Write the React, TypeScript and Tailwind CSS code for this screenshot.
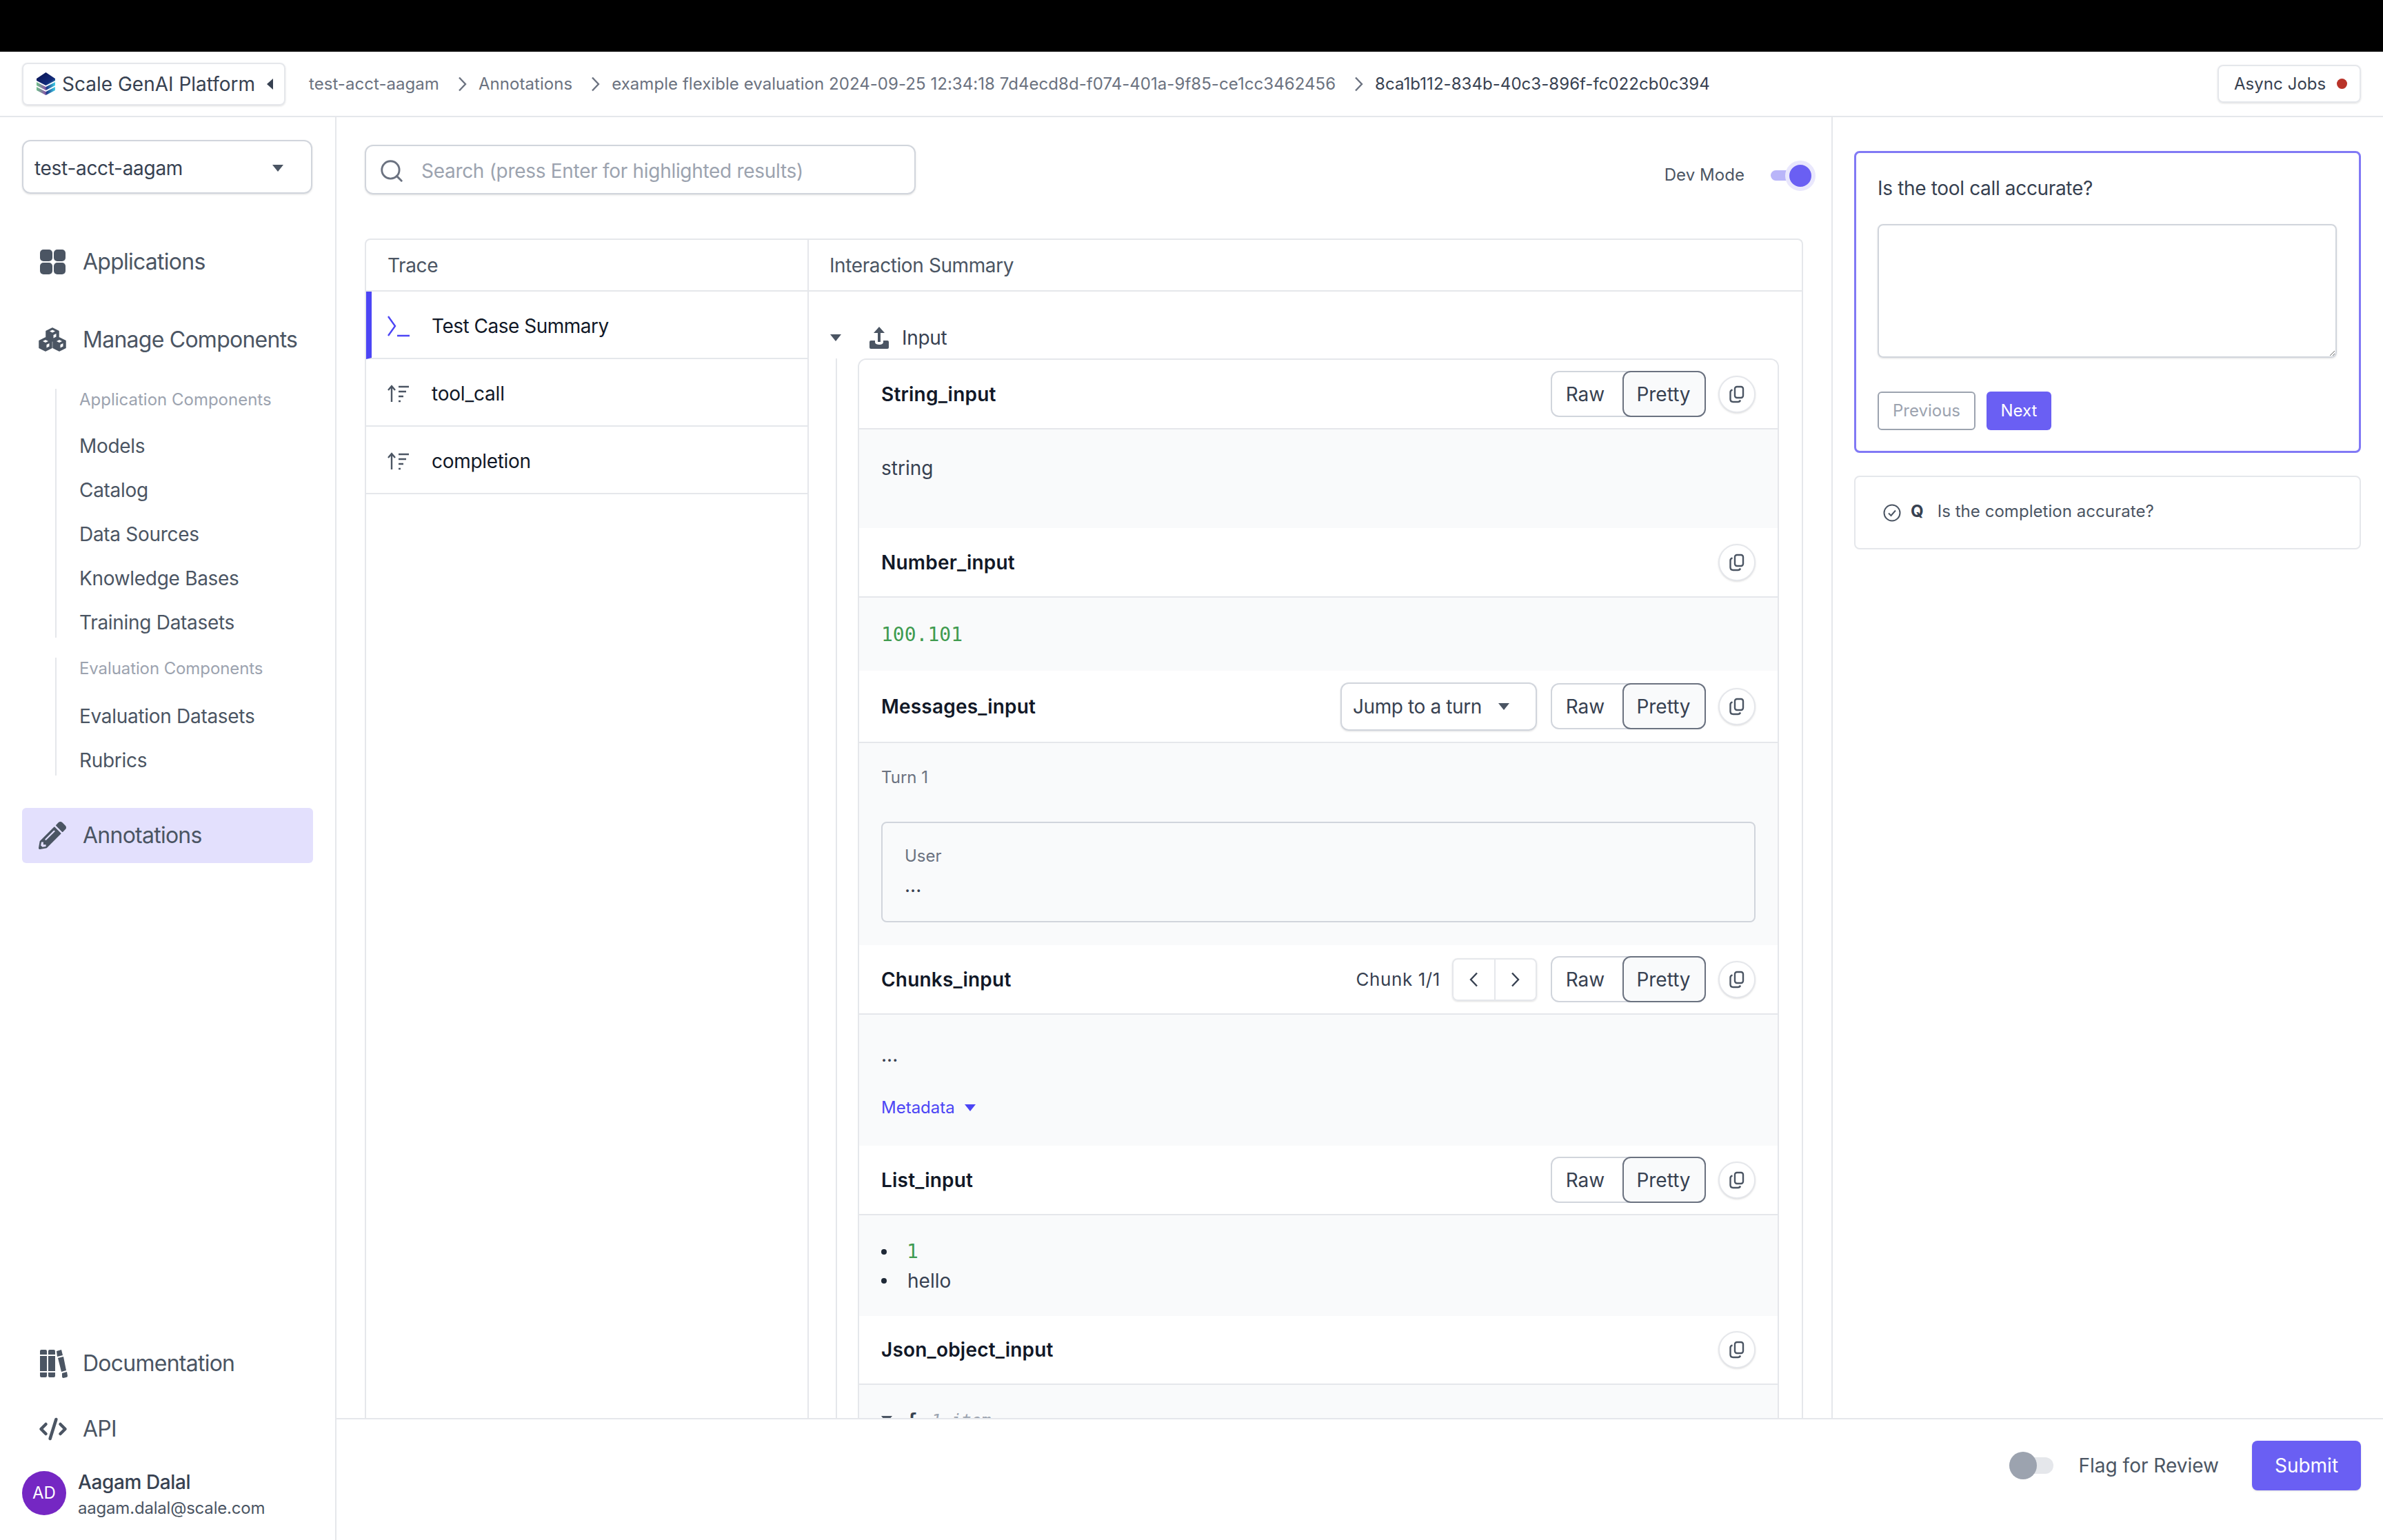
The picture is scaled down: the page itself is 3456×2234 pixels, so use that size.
import React from 'react';
import { CodeXml, Search } from 'lucide-react';
import { FaPencilAlt } from 'react-icons/fa';

const CopyIcon = () => (
    <svg width="22" height="26" viewBox="0 0 22 26" fill="none" stroke="#4b5563" strokeWidth="2.4">
        <rect x="8" y="2" width="12" height="16" rx="3" />
        <path d="M4.5 6.5C2.5 7 1.5 8 1.5 10v10c0 2.5 1.5 4 4 4h7c2 0 3-1 3.5-2.5" />
    </svg>
);

const Caret = ({ className = 'border-t-[#4b5563]' }: { className?: string }) => (
    <span className={`inline-block w-0 h-0 border-x-[8px] border-x-transparent border-t-[10px] ${className}`} />
);

// narrow chevron, lucide's is too wide for the breadcrumb
const Chevron = ({ left = false, className = '' }: { left?: boolean; className?: string }) => (
    <svg className={className} width="14" height="22" viewBox="0 0 14 22" fill="none" stroke="currentColor" strokeWidth="2.4">
        <path d={left ? 'M12 1.5L3 11l9 9.5' : 'M2 1.5L11 11l-9 9.5'} />
    </svg>
);

const TraceIcon = () => (
    <svg width="32" height="26" viewBox="0 0 32 26" fill="none" stroke="#4b5563" strokeWidth="2.4">
        <path d="M6 25V3M1 8l5-6 5 6" />
        <path d="M16 3h15M16 10h11M16 17h7M16 24h3" />
    </svg>
);

const CubesIcon = () => (
    <svg width="40" height="36" viewBox="0 0 40 36">
        <g fill="#4b5563" stroke="#4b5563" strokeWidth="1.5" strokeLinejoin="round">
            <path d="M20 1l9 4.5v10L20 20l-9-4.5v-10z" />
            <path d="M10 15l9 4.5v10L10 34l-9-4.500v-10z" />
            <path d="M30 15l9 4.500v10L30 34l-9-4.500v-10z" />
        </g>
        <g fill="#fff">
            <path d="M20 3.500l4 2-4 2-4-2zM21.500 11l4-2v4.500l-4 2zM10 18l4 2-4 2-4-2zM30 18l4 2-4 2-4-2zM11.500 25l4-2v4.500l-4 2zM31.500 25l4-2v4.500l-4 2z" />
        </g>
    </svg>
);

const ScaleLogo = () => (
    <svg width="29" height="33" viewBox="0 0 29 33">
        <defs>
            <linearGradient id="scaleTop" x1="0" y1="0" x2="1" y2="1">
                <stop offset="0" stopColor="#0a1450" />
                <stop offset="0.7" stopColor="#132a7a" />
                <stop offset="1" stopColor="#3fd0e8" />
            </linearGradient>
            <linearGradient id="scaleEdge" x1="0" y1="0" x2="1" y2="0">
                <stop offset="0" stopColor="#6fc28a" />
                <stop offset="0.45" stopColor="#8a5fa8" />
                <stop offset="0.55" stopColor="#1d3a8a" />
                <stop offset="1" stopColor="#3fd0e8" />
            </linearGradient>
        </defs>
        <path d="M1 21l13.500 7L28 21v5l-13.500 7L1 26z" fill="url(#scaleEdge)" />
        <path d="M1 14l13.500 7L28 14v5l-13.500 7L1 19z" fill="url(#scaleEdge)" />
        <path d="M14.500 0L28 9v3l-13.500 7L1 12V9z" fill="url(#scaleTop)" />
    </svg>
);

const CopyButton = () => (
    <button className="w-[54px] h-[54px] rounded-full border-2 border-gray-200 bg-white shadow-sm flex items-center justify-center">
        <CopyIcon />
    </button>
);

const RawPretty = () => (
    <div className="flex h-[67px] w-[225px] ml-[2px] text-[28px] text-[#374151] rounded-xl border-2 border-gray-300 bg-white">
        <div className="w-[102px] pr-[6px] flex items-center justify-center">Raw</div>
        <div className="flex-1 -my-[2px] -mr-[2px] pr-[2px] flex items-center justify-center rounded-xl border-2 border-[#6b7280] bg-gray-50">Pretty</div>
    </div>
);

function FieldHeader({ title, height, children }: { title: string; height: string; children?: React.ReactNode }) {
    return (
        <div className={`flex items-center justify-between pl-8 pr-[32px] bg-white border-b-2 border-gray-200 ${height}`}>
            <span className="text-[28px] font-semibold tracking-[0.2px] text-[#111827]">{title}</span>
            <div className="flex items-center gap-[18px]">{children}</div>
        </div>
    );
}

const subLinks1 = ['Models', 'Catalog', 'Data Sources', 'Knowledge Bases', 'Training Datasets'];
const subLinks2 = ['Evaluation Datasets', 'Rubrics'];

function Sidebar() {
    return (
        <aside className="w-[488px] shrink-0 border-r-2 border-gray-200 flex flex-col px-8 pt-[33px] text-[#4b5563]">
            <div className="h-[78px] w-[421px] rounded-xl border-2 border-gray-300 shadow-sm flex items-center justify-between pl-4 pr-10 pt-[3px] text-[28px] tracking-[-0.3px] text-[#374151]">
                <span>test-acct-aagam</span>
                <Caret />
            </div>

            <div className="flex items-center h-[40px] mt-[79px] pl-[26px] gap-[25px] text-[32px] tracking-[-0.75px]">
                <div className="grid grid-cols-2 gap-[2px] w-[37px]">
                    <span className="h-[17px] rounded-[5px] bg-[#4b5563]" />
                    <span className="h-[17px] rounded-[5px] bg-[#4b5563]" />
                    <span className="h-[17px] rounded-[5px] bg-[#4b5563]" />
                    <span className="h-[17px] rounded-[5px] bg-[#4b5563]" />
                </div>
                Applications
            </div>
            <div className="flex items-center h-[40px] mt-[73px] pl-[24px] gap-[24px] text-[32px] tracking-[-0.75px]">
                <CubesIcon />
                Manage Components
            </div>

            <div className="ml-[48px] mt-[51px] pl-[33px] border-l-2 border-gray-200">
                <div className="h-[32px] flex items-center text-[24px] text-[#9ca3af]">Application Components</div>
                <div className="flex flex-col mt-[29px] gap-[20px] text-[28px] tracking-[-0.3px]">
                    {subLinks1.map((l) => (
                        <div key={l} className="h-[44px] flex items-center">{l}</div>
                    ))}
                </div>
            </div>
            <div className="ml-[48px] mt-[29px] pl-[33px] border-l-2 border-gray-200">
                <div className="h-[32px] flex items-center text-[24px] tracking-[-0.1px] text-[#9ca3af]">Evaluation Components</div>
                <div className="flex flex-col mt-[31px] gap-[20px] text-[28px] tracking-[-0.3px]">
                    {subLinks2.map((l) => (
                        <div key={l} className="h-[44px] flex items-center">{l}</div>
                    ))}
                </div>
            </div>

            <div className="mt-[47px] h-[80px] rounded-md bg-[#e3e0fd] flex items-center pl-[24px] gap-[24px] text-[32px] tracking-[-0.75px]">
                <FaPencilAlt className="w-[40px] h-[40px]" />
                Annotations
            </div>

            <div className="mt-auto flex items-center h-[40px] pl-[24px] gap-[22px] text-[32px] tracking-[-0.75px]">
                <svg width="42" height="42" viewBox="0 0 42 42" fill="#4b5563">
                    <path d="M2 3q0-2 2-2h6q2 0 2 2v5H2zM2 10h10v22H2zM2 34h10v5q0 2-2 2H4q-2 0-2-2zM14 3q0-2 2-2h6q2 0 2 2v5H14zM14 10h10v22H14zM14 34h10v5q0 2-2 2h-6q-2 0-2-2zM26 3l7-2 2 8-8 2zM28 13l8-2 4 20-7 2zM34 35l7-2 1 6q0 2-2 2l-4 1q-2 0-2-2z" />
                </svg>
                Documentation
            </div>
            <div className="mt-[55px] flex items-center h-[40px] pl-[24px] gap-[22px] text-[32px] tracking-[-0.75px]">
                <CodeXml className="w-[42px] h-[42px]" strokeWidth={2.6} />
                API
            </div>
            <div className="mt-[32px] mb-[27px] flex items-center gap-[17px]">
                <div className="w-[64px] h-[64px] rounded-full bg-[#7527c3] text-white text-[24px] flex items-center justify-center">AD</div>
                <div className="flex flex-col pt-[6px]">
                    <span className="text-[28px] font-medium tracking-[-0.4px] text-[#374151] leading-[38px]">Aagam Dalal</span>
                    <span className="text-[24px] tracking-[-0.2px] leading-[38px]">aagam.dalal@scale.com</span>
                </div>
            </div>
        </aside>
    );
}

function TopBar() {
    return (
        <header className="h-[95px] shrink-0 border-b-2 border-gray-200 flex items-center pl-8 pr-8 text-[24px] text-[#6b7280] tracking-[0.05px]">
            <div className="w-[382px] h-[62px] rounded-lg border-2 border-gray-200 shadow-sm flex items-center pl-[18px] gap-[9px] text-[28px] text-[#374151] tracking-normal">
                <ScaleLogo />
                <span>Scale GenAI Platform</span>
                <span className="ml-[8px] w-0 h-0 border-y-[8px] border-y-transparent border-r-[9px] border-r-[#374151]" />
            </div>
            <span className="ml-[34px]">test-acct-aagam</span>
            <Chevron className="ml-[27px] mr-[16px]" />
            <span>Annotations</span>
            <Chevron className="ml-[27px] mr-[16px]" />
            <span>example flexible evaluation 2024-09-25 12:34:18 7d4ecd8d-f074-401a-9f85-ce1cc3462456</span>
            <Chevron className="ml-[27px] mr-[16px]" />
            <span className="text-[#374151]">8ca1b112-834b-40c3-896f-fc022cb0c394</span>
            <div className="ml-auto w-[208px] h-[55px] rounded-lg border-2 border-gray-200 shadow-sm flex items-center pl-[22px] gap-[16px] text-[#374151]">
                Async Jobs
                <span className="w-[15px] h-[15px] rounded-full bg-[#b93329]" />
            </div>
        </header>
    );
}

function TraceColumn() {
    return (
        <div className="w-[642px] shrink-0 border-r-2 border-gray-200 flex flex-col">
            <div className="h-[75px] shrink-0 flex items-center pl-[31px] text-[28px] tracking-[-0.4px] text-[#4b5563] border-b-2 border-gray-200">Trace</div>
            <div className="h-[98px] border-b-2 border-gray-200 flex items-center text-[28px] tracking-[-0.5px] text-[#111827] border-l-[8px] border-l-[#4c45f5] pl-[23px] pt-[3px] gap-[32px]">
                <svg width="32" height="32" viewBox="0 0 32 32" fill="none" stroke="#4c45f5" strokeWidth="2.4">
                    <path d="M1 2l10 14L1 30" />
                    <path d="M14 30h18" />
                </svg>
                Test Case Summary
            </div>
            <div className="h-[98px] border-b-2 border-gray-200 flex items-center text-[28px] tracking-[-0.2px] text-[#111827] pl-[31px] pt-[3px] gap-[32px]">
                <TraceIcon />
                tool_call
            </div>
            <div className="h-[98px] border-b-2 border-gray-200 flex items-center text-[28px] tracking-[-0.3px] text-[#111827] pl-[31px] pt-[3px] gap-[32px]">
                <TraceIcon />
                completion
            </div>
        </div>
    );
}

function Fields() {
    return (
        <div className="flex-1 min-w-0 flex flex-col">
            <div className="h-[75px] shrink-0 flex items-center pl-[30px] text-[28px] tracking-[-0.4px] text-[#4b5563] border-b-2 border-gray-200">Interaction Summary</div>
            <div className="h-[97px] shrink-0 flex items-center pt-[36px] pl-[31px] text-[28px] tracking-[-0.3px] text-[#374151]">
                <Caret />
                <svg className="ml-[40px] mr-[18px]" width="30" height="32" viewBox="0 0 30 32" fill="#4b5563">
                    <path d="M15 0l8 9h-6v13h-4V9H7z" />
                    <path d="M1 22q0-2 2-2h6v2q0 4 6 4t6-4v-2h6q2 0 2 2v8q0 2-2 2H3q-2 0-2-2z" />
                </svg>
                Input
            </div>
            <div className="ml-[39px] mr-[33px] pl-[30px] border-l-2 border-gray-200">
                <div className="border-x-2 border-t-2 border-gray-200 rounded-t-xl overflow-hidden">
                    <FieldHeader title="String_input" height="h-[101px]">
                        <RawPretty />
                        <CopyButton />
                    </FieldHeader>
                    <div className="h-[143px] bg-gray-50 pl-8 pt-[35px] text-[28px] text-[#374151]">string</div>

                    <FieldHeader title="Number_input" height="h-[101px]">
                        <CopyButton />
                    </FieldHeader>
                    <div className="h-[106px] bg-gray-50 pl-8 pt-[33px] text-[28px] text-[#3f9b4f] font-['DejaVu_Sans_Mono',monospace]">100.101</div>

                    <FieldHeader title="Messages_input" height="h-[105px]">
                        <div className="w-[285px] h-[70px] rounded-xl border-2 border-gray-300 shadow-sm flex items-center justify-between pl-[16px] pr-[38px] text-[28px] tracking-[-0.4px] text-[#374151]">
                            Jump to a turn
                            <Caret />
                        </div>
                        <RawPretty />
                        <CopyButton />
                    </FieldHeader>
                    <div className="h-[293px] bg-gray-50 pl-8 pr-[32px] pt-[32px]">
                        <div className="h-[36px] flex items-center text-[24px] text-[#6b7280]">Turn 1</div>
                        <div className="mt-[46px] h-[146px] rounded-lg border-2 border-gray-300 pl-[32px] pt-[30px]">
                            <div className="h-[36px] flex items-center text-[24px] text-[#6b7280]">User</div>
                            <div className="h-[36px] mt-[6px] flex items-center text-[28px] text-[#374151]">...</div>
                        </div>
                    </div>

                    <FieldHeader title="Chunks_input" height="h-[101px]">
                        <div className="flex items-center gap-[17px]">
                            <span className="text-[26px] tracking-[0.6px] text-[#374151]">Chunk 1/1</span>
                            <div className="w-[123px] h-[62px] rounded-lg border-2 border-gray-200 shadow-sm flex text-[#374151]">
                                <div className="flex-1 border-r-2 border-gray-200 flex items-center justify-center"><Chevron left /></div>
                                <div className="flex-1 flex items-center justify-center"><Chevron /></div>
                            </div>
                        </div>
                        <RawPretty />
                        <CopyButton />
                    </FieldHeader>
                    <div className="h-[190px] bg-gray-50 pl-8 pt-[38px] text-[#374151]">
                        <div className="h-[40px] flex items-center text-[28px]">...</div>
                        <div className="mt-[39px] h-[36px] flex items-center gap-[14px] text-[24px] text-[#4c45f5]">
                            Metadata
                            <Caret className="border-t-[#4c45f5]" />
                        </div>
                    </div>

                    <FieldHeader title="List_input" height="h-[101px]">
                        <RawPretty />
                        <CopyButton />
                    </FieldHeader>
                    <ul className="h-[146px] bg-gray-50 pl-8 pt-[32px] text-[28px] text-[#374151] leading-[42px]">
                        <li className="flex items-center gap-[29px]"><span className="w-[8px] h-[8px] rounded-full bg-[#1f2937]" /><span className="text-[#3f9b4f] font-['DejaVu_Sans_Mono',monospace]">1</span></li>
                        <li className="flex items-center gap-[30px]"><span className="w-[8px] h-[8px] rounded-full bg-[#1f2937]" />hello</li>
                    </ul>

                    <FieldHeader title="Json_object_input" height="h-[100px]">
                        <CopyButton />
                    </FieldHeader>
                    <div className="h-[120px] bg-gray-50 pl-8 pt-[32px] flex items-start gap-[20px] text-[28px] font-['DejaVu_Sans_Mono',monospace] text-[#374151]">
                        <span className="mt-[13px] w-[16px] flex"><Caret /></span>
                        <span className="font-bold">{'{'}</span>
                        <span className="text-[24px] italic text-[#9ca3af] mt-[2px]">1 item</span>
                    </div>
                </div>
            </div>
        </div>
    );
}

function QuestionPanel() {
    return (
        <div className="w-[800px] shrink-0 border-l-2 border-gray-200 pl-[31px] pr-8 pt-[49px] flex flex-col gap-[33px]">
            <div className="h-[438px] rounded-lg border-[3px] border-[#8179f5] pl-[31px] pr-[32px] pt-[31px]">
                <div className="h-[40px] flex items-center text-[28px] tracking-[-0.34px] text-[#374151]">Is the tool call accurate?</div>
                <textarea className="block mt-[32px] w-full h-[194px] rounded-lg border-2 border-gray-300 shadow-sm resize-y" />
                <div className="mt-[49px] flex gap-[16px]">
                    <button className="w-[142px] h-[56px] rounded-md border-2 border-[#9ca3af] text-[24px] text-[#9ca3af]">Previous</button>
                    <button className="w-[94px] h-[56px] rounded-md bg-[#6a5ff3] text-[24px] text-white">Next</button>
                </div>
            </div>
            <div className="h-[107px] rounded-lg border-2 border-gray-200 flex items-center pl-[40px] text-[24px] text-[#4b5563]">
                <svg width="26" height="26" viewBox="0 0 26 26" fill="none" stroke="#4b5563" strokeWidth="2">
                    <circle cx="13" cy="13" r="11.5" />
                    <path d="M8 13.5l3.5 3.5L18 9.5" />
                </svg>
                <span className="ml-[14px] pb-[4px] font-bold text-[#374151]">Q</span>
                <span className="ml-[20px] pb-[4px] tracking-[0.05px]">Is the completion accurate?</span>
            </div>
        </div>
    );
}

export default function App() {
    return (
        <div className="h-[2234px] w-[3456px] flex flex-col overflow-hidden bg-white font-['Inter',sans-serif]">
            <div className="h-[75px] shrink-0 bg-black" />
            <TopBar />
            <div className="flex-1 min-h-0 flex">
                <Sidebar />
                <div className="flex-1 min-w-0 flex flex-col">
                    <div className="flex-1 min-h-0 flex overflow-hidden">
                        <main className="flex-1 min-w-0 flex flex-col pl-[41px] pr-[41px] pt-[40px]">
                            <div className="flex items-start justify-between shrink-0 h-[136px]">
                                <div className="w-[799px] h-[72px] rounded-xl border-2 border-gray-300 shadow-sm flex items-center pl-[18px] gap-[24px] pt-[4px] text-[28px] tracking-[-0.3px] text-[#9ca3af]">
                                    <Search className="w-[38px] h-[38px] text-[#6b7280]" strokeWidth={1.8} />
                                    Search (press Enter for highlighted results)
                                </div>
                                <div className="flex items-center h-[88px] text-[24px] text-[#4b5563] tracking-[0.05px]">
                                    Dev Mode
                                    <div className="relative ml-[38px] mr-[-10px] w-[57px] h-[15px] rounded-full bg-[#b9b5f9]">
                                        <span className="absolute right-[-8px] top-[-14px] w-[44px] h-[44px] rounded-full bg-[#6a5ff3] border-[6px] border-[#e9e7fd]" />
                                    </div>
                                </div>
                            </div>
                            <div className="flex-1 min-h-0 flex border-x-2 border-t-2 border-gray-200 rounded-t-lg overflow-hidden">
                                <TraceColumn />
                                <Fields />
                            </div>
                        </main>
                        <QuestionPanel />
                    </div>
                    <footer className="h-[177px] shrink-0 border-t-2 border-gray-200 flex items-start justify-end pr-8 pt-[31px]">
                        <div className="flex items-center h-[72px] text-[28px] text-[#4b5563]">
                            <div className="relative w-[64px] h-[24px] rounded-full bg-gray-200">
                                <span className="absolute left-0 top-[-8px] w-[40px] h-[40px] rounded-full bg-[#9ca3af]" />
                            </div>
                            <span className="ml-[37px]">Flag for Review</span>
                            <button className="ml-[48px] w-[158px] h-[72px] rounded-lg bg-[#6a5ff3] text-white shadow-sm">Submit</button>
                        </div>
                    </footer>
                </div>
            </div>
        </div>
    );
}
